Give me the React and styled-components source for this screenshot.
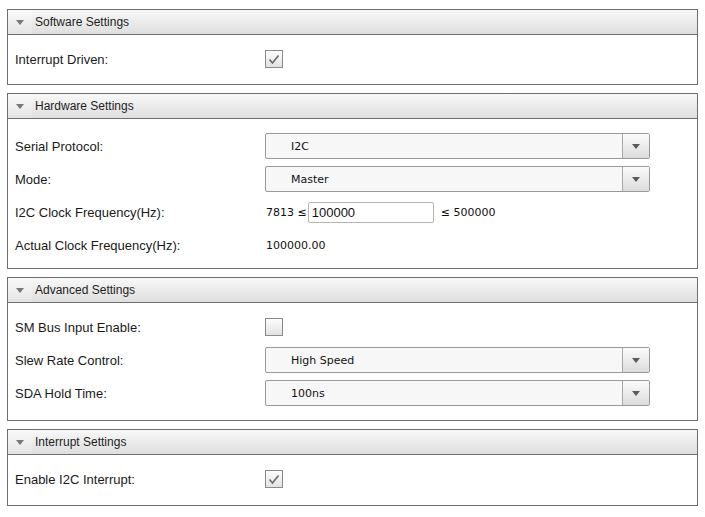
import React from "react";
import styled, { createGlobalStyle } from "styled-components";

const GlobalStyle = createGlobalStyle`
  html, body {
    margin: 0;
    padding: 0;
    background: #ffffff;
  }
  body {
    font-family: "Liberation Sans", Arial, sans-serif;
    color: #1a1a1a;
  }
`;

const Page = styled.div`
  width: 705px;
  height: 517px;
  padding: 9px 7px 0 7px;
  box-sizing: border-box;
  display: flex;
  flex-direction: column;
  gap: 8px;
`;

const Panel = styled.section`
  border: 1px solid #6e6e6e;
  background: #fff;
`;

const Header = styled.div`
  height: 24px;
  display: flex;
  align-items: center;
  border-bottom: 1px solid #6e6e6e;
  background: linear-gradient(#f8f8f8, #dedede);
  font-size: 12px;
  color: #1e1e1e;
`;

const ArrowBox = styled.div`
  width: 24px;
  height: 100%;
  display: flex;
  align-items: center;
  justify-content: center;
  margin-right: 3px;
  background: linear-gradient(#fafafa, #e4e4e4);
`;

const Body = styled.div`
  padding: ${(p) => p.$pad || "11px 0 13px"};
  display: flex;
  flex-direction: column;
  gap: 7px;
`;

const Row = styled.div`
  height: 26px;
  display: flex;
  align-items: center;
  padding-left: 7px;
`;

const Label = styled.div`
  width: 250px;
  font-size: 13px;
  color: #1a1a1a;
`;

const CheckBox = styled.div`
  width: 16px;
  height: 16px;
  border: 1px solid #8a8a8a;
  background: linear-gradient(#fdfdfd, #e2e2e2);
  display: flex;
  align-items: center;
  justify-content: center;
`;

const Select = styled.div`
  width: 385px;
  height: 26px;
  box-sizing: border-box;
  border: 1px solid #9a9a9a;
  border-radius: 2px;
  background: #f7f7f7;
  display: flex;
  align-items: stretch;
`;

const SelectText = styled.div`
  flex: 1;
  display: flex;
  align-items: center;
  padding-left: 25px;
  font-family: "DejaVu Sans", Verdana, sans-serif;
  font-size: 11px;
  color: #111;
`;

const SelectButton = styled.div`
  width: 26px;
  border-left: 1px solid #a8a8a8;
  background: linear-gradient(#fbfbfb, #dcdcdc);
  display: flex;
  align-items: center;
  justify-content: center;
`;

const Value = styled.span`
  font-family: "DejaVu Sans", Verdana, sans-serif;
  font-size: 11px;
  color: #111;
  margin-left: ${(p) => p.$ml || 0}px;
  white-space: pre;
`;

const NumInput = styled.div`
  width: 126px;
  height: 21px;
  box-sizing: border-box;
  border: 1px solid #b4b4b4;
  border-radius: 2px;
  background: #fff;
  margin-left: 1px;
  margin-right: 7px;
  padding-left: 3px;
  display: flex;
  align-items: center;
  font-size: 13px;
  color: #111;
`;

const Triangle = ({ color = "#666" }) => (
  <svg width="8" height="5" viewBox="0 0 8 5">
    <polygon points="0,0 8,0 4,5" fill={color} />
  </svg>
);

const Check = () => (
  <svg width="12" height="11" viewBox="0 0 12 11">
    <polyline
      points="1.5,5.5 4.5,9 10.5,1.5"
      fill="none"
      stroke="#6a6a6a"
      strokeWidth="1.6"
    />
  </svg>
);

const Section = ({ title, pad, children }) => (
  <Panel>
    <Header>
      <ArrowBox>
        <Triangle color="#777" />
      </ArrowBox>
      {title}
    </Header>
    <Body $pad={pad}>{children}</Body>
  </Panel>
);

const Dropdown = ({ value }) => (
  <Select>
    <SelectText>{value}</SelectText>
    <SelectButton>
      <Triangle color="#5a5a5a" />
    </SelectButton>
  </Select>
);

const App = () => {
  return (
    <>
      <GlobalStyle />
      <Page>
        <Section title="Software Settings" pad="11px 0 12px">
          <Row>
            <Label>Interrupt Driven:</Label>
            <CheckBox>
              <Check />
            </CheckBox>
          </Row>
        </Section>

        <Section title="Hardware Settings" pad="14px 0 10px">
          <Row>
            <Label>Serial Protocol:</Label>
            <Dropdown value="I2C" />
          </Row>
          <Row>
            <Label>Mode:</Label>
            <Dropdown value="Master" />
          </Row>
          <Row>
            <Label>I2C Clock Frequency(Hz):</Label>
            <Value $ml={1}>7813 ≤</Value>
            <NumInput>100000</NumInput>
            <Value>≤ 500000</Value>
          </Row>
          <Row>
            <Label>Actual Clock Frequency(Hz):</Label>
            <Value $ml={1}>100000.00</Value>
          </Row>
        </Section>

        <Section title="Advanced Settings" pad="11px 0 14px">
          <Row>
            <Label>SM Bus Input Enable:</Label>
            <CheckBox />
          </Row>
          <Row>
            <Label>Slew Rate Control:</Label>
            <Dropdown value="High Speed" />
          </Row>
          <Row>
            <Label>SDA Hold Time:</Label>
            <Dropdown value="100ns" />
          </Row>
        </Section>

        <Section title="Interrupt Settings" pad="11px 0 13px">
          <Row>
            <Label>Enable I2C Interrupt:</Label>
            <CheckBox>
              <Check />
            </CheckBox>
          </Row>
        </Section>
      </Page>
    </>
  );
};

export default App;
